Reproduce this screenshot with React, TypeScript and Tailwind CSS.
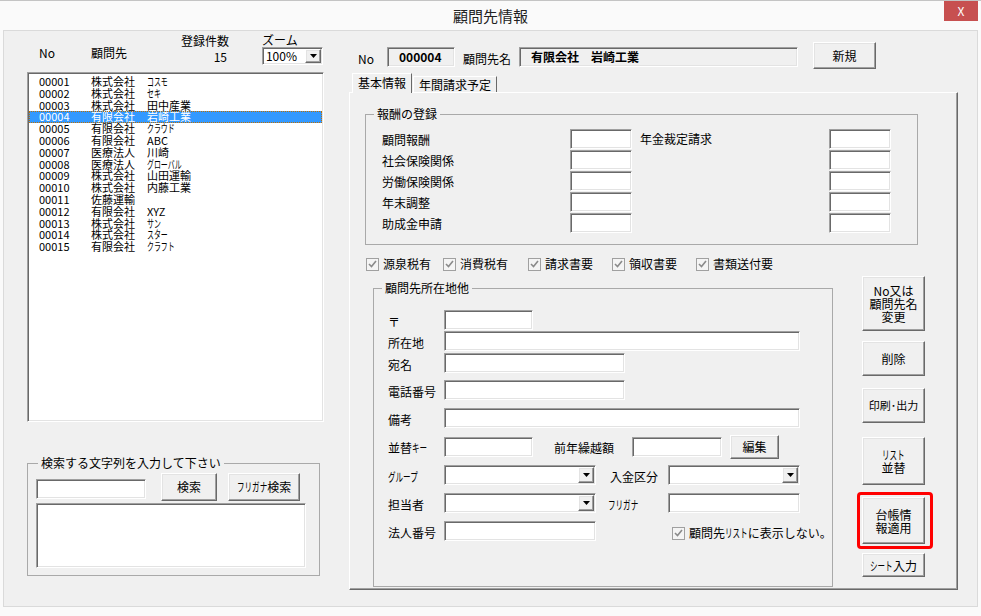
const sunken =
  "border border-t-[#a0a0a0] border-l-[#a0a0a0] border-r-white border-b-white shadow-[inset_1px_1px_0_#696969,inset_-1px_-1px_0_#e3e3e3]";
const raised =
  "border border-t-white border-l-white border-r-[#696969] border-b-[#696969] shadow-[inset_-1px_-1px_0_#a0a0a0,inset_1px_1px_0_#e3e3e3] bg-[#f0f0f0] flex items-center justify-center text-center";

// half-width kana look: full-width glyphs squeezed
function Hw({ t }: { t: string }) {
  return (
    <span className="inline-block whitespace-nowrap" style={{ width: t.length * 7.6 }}>
      <span className="inline-block origin-left scale-x-[0.63]">{t}</span>
    </span>
  );
}

const rows: [string, string, React.ReactNode][] = [
  ["00001", "株式会社", <Hw t="コスモ" />],
  ["00002", "株式会社", <Hw t="セキ" />],
  ["00003", "株式会社", "田中産業"],
  ["00004", "有限会社", "岩崎工業"],
  ["00005", "有限会社", <Hw t="クラウド" />],
  ["00006", "有限会社", "ABC"],
  ["00007", "医療法人", "川崎"],
  ["00008", "医療法人", <Hw t="グローバル" />],
  ["00009", "株式会社", "山田運輸"],
  ["00010", "株式会社", "内藤工業"],
  ["00011", "佐藤運輸", ""],
  ["00012", "有限会社", "XYZ"],
  ["00013", "株式会社", <Hw t="サン" />],
  ["00014", "株式会社", <Hw t="スター" />],
  ["00015", "有限会社", <Hw t="クラフト" />],
];

const fees = [
  ["顧問報酬", "年金裁定請求"],
  ["社会保険関係", ""],
  ["労働保険関係", ""],
  ["年末調整", ""],
  ["助成金申請", ""],
];

function Input({ className }: { className: string }) {
  return <div className={`${sunken} bg-white h-[20px] ${className}`} />;
}

function Combo({ className, text }: { className: string; text?: string }) {
  return (
    <div className={`${sunken} bg-white flex items-center justify-end p-[1px] ${className}`}>
      {text && <span className="flex-1 text-right pr-[8px]">{text}</span>}
      <div className={`${raised} w-[16px] h-full`}>
        <svg width="7" height="4" viewBox="0 0 7 4">
          <path d="M0 0h7L3.5 4z" fill="#000" />
        </svg>
      </div>
    </div>
  );
}

function Check({ label }: { label: React.ReactNode }) {
  return (
    <div className="flex items-center">
      <span className="w-[13px] h-[13px] border border-[#a0a0a0] bg-[#f4f4f4] flex items-center justify-center">
        <svg width="9" height="8" viewBox="0 0 9 8">
          <path d="M1 4l2.5 2.5L8 1" stroke="#8a8a8a" strokeWidth="1.6" fill="none" />
        </svg>
      </span>
      <span className="ml-[4px]">{label}</span>
    </div>
  );
}

export default function App() {
  return (
    <div className="w-[981px] h-[616px] bg-[#fafafa] border-t border-[#c4c4c4] text-[12px] leading-[16px] text-black font-['Noto_Sans_CJK_JP',sans-serif] overflow-hidden">
      {/* title bar */}
      <div className="h-[29px] grid grid-cols-[1fr_auto_1fr]">
        <div />
        <div className="text-[15px] leading-[30px] text-[#222]">顧問先情報</div>
        <div className="flex justify-end items-start pr-[3px]">
          <div className="w-[34px] h-[20px] bg-[#c75050] text-white text-[12px] leading-[20px] text-center">X</div>
        </div>
      </div>

      {/* client area */}
      <div className="mx-[3px] h-[577px] border border-[#dadada] bg-[#f0f0f0] flex">
        {/* left column */}
        <div className="w-[344px] flex flex-col">
          <div className="flex h-[41px] pl-[35px]">
            <div className="w-[52px] pt-[14px]">No</div>
            <div className="w-[90px] pt-[14px]">顧問先</div>
            <div className="w-[81px] pt-[2px]">
              <div>登録件数</div>
              <div className="text-right pr-[35px]">15</div>
            </div>
            <div className="pt-[2px]">
              <div className="leading-[14px]">ズーム</div>
              <Combo className="w-[61px] h-[18px]" text="100%" />
            </div>
          </div>

          <div className={`ml-[23px] w-[297px] h-[350px] bg-white ${sunken} pt-[3px] text-[11px]`}>
            {rows.map((r, i) => (
              <div
                key={r[0]}
                className={`mx-[1px] h-[11.8px] leading-[11.8px] flex pl-[10px] ${
                  i === 3 ? "bg-[#3399ff] text-white outline-1 outline-dotted outline-[#c07000] -outline-offset-1" : ""
                }`}
              >
                <span className="w-[52px]">{r[0]}</span>
                <span className="w-[56px]">{r[1]}</span>
                <span>{r[2]}</span>
              </div>
            ))}
          </div>

          <fieldset className="ml-[23px] mt-[33px] w-[293px] h-[121px] border border-[#a9a9a9]">
            <legend className="ml-[10px] px-[3px] leading-[16px]">検索する文字列を入力して下さい</legend>
            <div className="mt-[2px] pl-[8px] flex items-start">
              <Input className="mt-[6px] w-[110px]" />
              <div className={`${raised} ml-[15px] w-[56px] h-[28px]`}>検索</div>
              <div className={`${raised} ml-[11px] w-[72px] h-[28px]`}>
                <div><Hw t="フリガナ" />検索</div>
              </div>
            </div>
            <div className={`${sunken} bg-white mt-[2px] ml-[8px] w-[270px] h-[65px]`} />
          </fieldset>
        </div>

        {/* right column */}
        <div className="flex-1 flex flex-col">
          <div className="mt-[11px] h-[27px] pl-[10px] flex items-start">
            <div className="w-[29px] mt-[9px]">No</div>
            <div className={`${sunken} mt-[5px] w-[68px] h-[20px] flex items-center pl-[11px] font-bold`}>000004</div>
            <div className="ml-[8px] w-[56px] mt-[9px]">顧問先名</div>
            <div className={`${sunken} mt-[5px] w-[279px] h-[20px] flex items-center pl-[11px] font-bold`}>
              有限会社　岩崎工業
            </div>
            <div className={`${raised} ml-[15px] w-[63px] h-[27px]`}>新規</div>
          </div>

          {/* tabs */}
          <div className="mt-[4px] h-[19px] pl-[4px] flex items-end">
            <div className="relative z-10 -mb-[1px] w-[60px] h-[20px] bg-[#f0f0f0] border-t border-l border-white border-r border-r-[#696969] text-center leading-[18px]">
              基本情報
            </div>
            <div className="ml-[1px] w-[84px] h-[16px] border-t border-l border-white border-r border-r-[#696969] text-center leading-[15px]">
              年間請求予定
            </div>
          </div>

          <div className="ml-[1px] w-[609px] h-[498px] border border-t-white border-l-white border-r-[#696969] border-b-[#696969] shadow-[inset_-1px_-1px_0_#a0a0a0] flex flex-col">
            <fieldset className="ml-[15px] mt-[13px] w-[553px] h-[139px] border border-[#a9a9a9]">
              <legend className="ml-[8px] px-[3px] leading-[16px]">報酬の登録</legend>
              <div className="mt-[6px]">
                {fees.map(([a, b]) => (
                  <div key={a} className="h-[21px] flex items-center">
                    <div className="w-[204px] pl-[16px] pt-[2px]">{a}</div>
                    <Input className="w-[62px]" />
                    <div className="ml-[8px] w-[189px]">{b}</div>
                    <Input className="w-[62px]" />
                  </div>
                ))}
              </div>
            </fieldset>

            <div className="mt-[11px] h-[16px] pl-[16px] flex items-center">
              <div className="w-[77px]"><Check label="源泉税有" /></div>
              <div className="w-[85px]"><Check label="消費税有" /></div>
              <div className="w-[84px]"><Check label="請求書要" /></div>
              <div className="w-[84px]"><Check label="領収書要" /></div>
              <div><Check label="書類送付要" /></div>
            </div>

            <div className="flex">
              <fieldset className="ml-[23px] mt-[8px] w-[460px] h-[307px] border border-[#a9a9a9]">
                <legend className="ml-[8px] px-[3px] leading-[16px]">顧問先所在地他</legend>
                <div className="pl-[14px]">
                  <div className="mt-[14px] h-[20px] flex items-center">
                    <div className="w-[56px] pt-[4px]">〒</div>
                    <Input className="w-[89px]" />
                  </div>
                  <div className="mt-[1px] h-[20px] flex items-center">
                    <div className="w-[56px] pt-[4px]">所在地</div>
                    <Input className="w-[356px]" />
                  </div>
                  <div className="mt-[2px] h-[20px] flex items-center">
                    <div className="w-[56px] pt-[4px]">宛名</div>
                    <Input className="w-[181px]" />
                  </div>
                  <div className="mt-[7px] h-[20px] flex items-center">
                    <div className="w-[56px] pt-[4px]">電話番号</div>
                    <Input className="w-[181px]" />
                  </div>
                  <div className="mt-[8px] h-[20px] flex items-center">
                    <div className="w-[56px] pt-[4px]">備考</div>
                    <Input className="w-[356px]" />
                  </div>
                  <div className="mt-[7px] h-[24px] flex items-center">
                    <div className="w-[56px] pt-[2px]">並替<Hw t="キー" /></div>
                    <Input className="w-[89px]" />
                    <div className="ml-[21px] w-[78px] pt-[2px]">前年繰越額</div>
                    <Input className="w-[90px]" />
                    <div className={`${raised} ml-[8px] w-[49px] h-[24px]`}>編集</div>
                  </div>
                  <div className="mt-[6px] h-[20px] flex items-center">
                    <div className="w-[56px] pt-[4px]"><Hw t="グループ" /></div>
                    <Combo className="w-[152px] h-[20px]" />
                    <div className="ml-[14px] w-[58px] pt-[4px]">入金区分</div>
                    <Combo className="w-[132px] h-[20px]" />
                  </div>
                  <div className="mt-[8px] h-[20px] flex items-center">
                    <div className="w-[56px] pt-[4px]">担当者</div>
                    <Combo className="w-[152px] h-[20px]" />
                    <div className="ml-[12px] w-[60px] pt-[4px]"><Hw t="フリガナ" /></div>
                    <Input className="w-[132px]" />
                  </div>
                  <div className="mt-[8px] h-[20px] flex items-center">
                    <div className="w-[56px] pt-[4px]">法人番号</div>
                    <Input className="w-[152px]" />
                    <div className="ml-[76px] pt-[4px]">
                      <Check label={<>顧問先<Hw t="リスト" />に表示しない。</>} />
                    </div>
                  </div>
                </div>
              </fieldset>

              <div className="ml-[29px] mt-[4px] w-[63px] flex flex-col leading-[13px]">
                <div className={`${raised} h-[55px]`}>
                  <div>No又は<br />顧問先名<br />変更</div>
                </div>
                <div className={`${raised} mt-[10px] h-[35px]`}>削除</div>
                <div className={`${raised} mt-[12px] h-[35px] text-[11px]`}>印刷･出力</div>
                <div className={`${raised} mt-[14px] h-[48px]`}>
                  <div><Hw t="リスト" /><br />並替</div>
                </div>
                <div className="mt-[7px] -ml-[5px] w-[76px] h-[57px] border-[3px] border-[#ff0000] rounded-[4px] pt-[2px] pl-[2px]">
                  <div className={`${raised} w-[63px] h-[47px]`}>
                    <div>台帳情<br />報適用</div>
                  </div>
                </div>
                <div className={`${raised} mt-[4px] h-[24px]`}>
                  <div><Hw t="シート" />入力</div>
                </div>
              </div>
            </div>
          </div>
        </div>
      </div>
    </div>
  );
}
